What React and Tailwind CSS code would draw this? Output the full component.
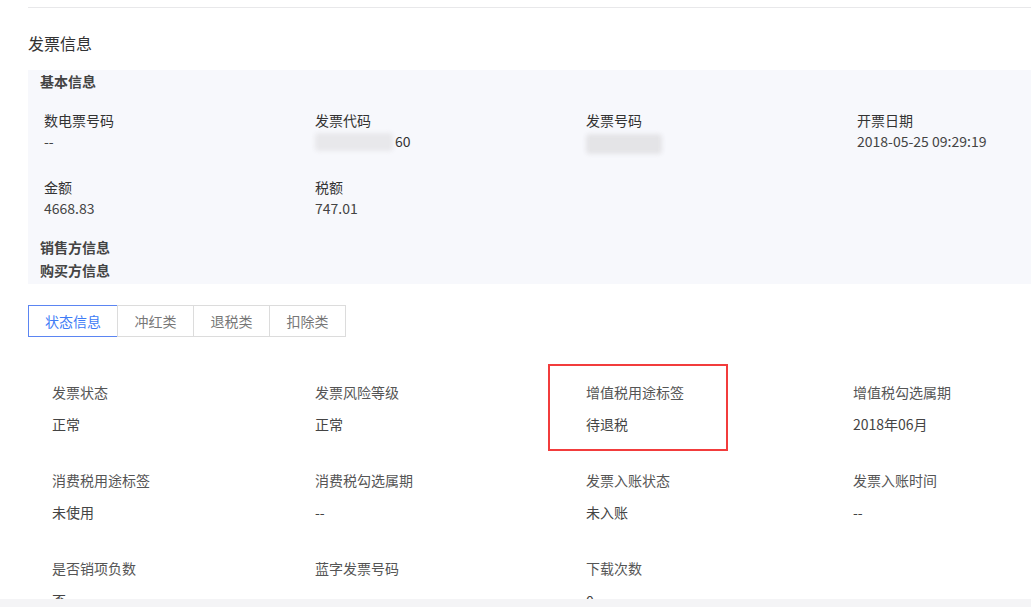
import React from "react";

const basicRows = [
  [
    { label: "数电票号码", value: "--" },
    { label: "发票代码", value: "code" },
    { label: "发票号码", value: "number" },
    { label: "开票日期", value: "2018-05-25 09:29:19" },
  ],
  [
    { label: "金额", value: "4668.83" },
    { label: "税额", value: "747.01" },
  ],
];

const statusItems = [
  { label: "发票状态", value: "正常" },
  { label: "发票风险等级", value: "正常" },
  { label: "增值税用途标签", value: "待退税" },
  { label: "增值税勾选属期", value: "2018年06月" },
  { label: "消费税用途标签", value: "未使用" },
  { label: "消费税勾选属期", value: "--" },
  { label: "发票入账状态", value: "未入账" },
  { label: "发票入账时间", value: "--" },
  { label: "是否销项负数", value: "否" },
  { label: "蓝字发票号码", value: "" },
  { label: "下载次数", value: "0" },
];

const tabs = ["状态信息", "冲红类", "退税类", "扣除类"];

function Redacted({ value }) {
  if (value === "code") {
    return (
      <span className="flex items-center h-[21px]">
        <span className="inline-block w-[78px] h-[18px] bg-[#e8e8eb] blur-[2px] rounded-sm" />
        <span className="ml-[2px]">60</span>
      </span>
    );
  }
  return (
    <span className="flex items-center h-[21px]">
      <span className="inline-block w-[76px] h-[20px] mt-[4px] bg-[#e4e4e7] blur-[2px] rounded-sm" />
    </span>
  );
}

export default function App() {
  return (
    <div
      className="relative w-[1031px] h-[607px] overflow-hidden bg-white text-[#333]"
      style={{ fontFamily: '"Noto Sans CJK SC", "Noto Sans", sans-serif' }}
    >
      <div className="pl-[28px]">
        <div className="mt-[7px] border-t border-[#e8e8ea]" />
        <h2 className="mt-[24px] text-[16px] leading-[22px] text-[#333]">发票信息</h2>

        <div className="mt-[16px] bg-[#f7f8fc] pl-[12px] pb-[2px]">
          <div className="text-[14px] leading-[22px] font-semibold text-[#444]">基本信息</div>
          {basicRows.map((row, i) => (
            <div
              key={i}
              className={`ml-[4px] grid grid-cols-[271px_271px_271px_1fr] text-[14px] leading-[21px] ${
                i === 0 ? "mt-[18px]" : "mt-[25px]"
              }`}
            >
              {row.map((item) => (
                <div key={item.label}>
                  <div className="text-[#333]">{item.label}</div>
                  {item.value === "code" || item.value === "number" ? (
                    <Redacted value={item.value} />
                  ) : (
                    <div className="text-[#444]">{item.value}</div>
                  )}
                </div>
              ))}
            </div>
          ))}
          <div className="mt-[17px] text-[14px] leading-[23px] font-semibold text-[#444]">销售方信息</div>
          <div className="text-[14px] leading-[23px] font-semibold text-[#444]">购买方信息</div>
        </div>

        <div className="mt-[21px] flex h-[32px] text-[14px]">
          {tabs.map((t, i) => (
            <div
              key={t}
              className={`flex items-center justify-center border ${
                i === 0
                  ? "w-[90px] border-[#5b85f2] text-[#3d7bf6]"
                  : "w-[77px] -ml-px border-[#dcdcdc] text-[#777]"
              }`}
            >
              {t}
            </div>
          ))}
        </div>

        <div className="mt-[45px] pl-[24px] grid grid-cols-[263px_271px_267px_1fr] gap-y-[36px] text-[14px] leading-[20px]">
          {statusItems.map((item) => (
            <div key={item.label}>
              <div className="text-[#555]">{item.label}</div>
              <div className="mt-[12px] h-[20px] text-[#444]">{item.value}</div>
            </div>
          ))}
        </div>
      </div>

      <div className="absolute left-[548px] top-[364px] w-[180px] h-[87px] border-2 border-[#f23c3c]" />
      <div className="absolute left-0 right-0 bottom-0 h-[8px] bg-[#f4f4f6]" />
    </div>
  );
}
